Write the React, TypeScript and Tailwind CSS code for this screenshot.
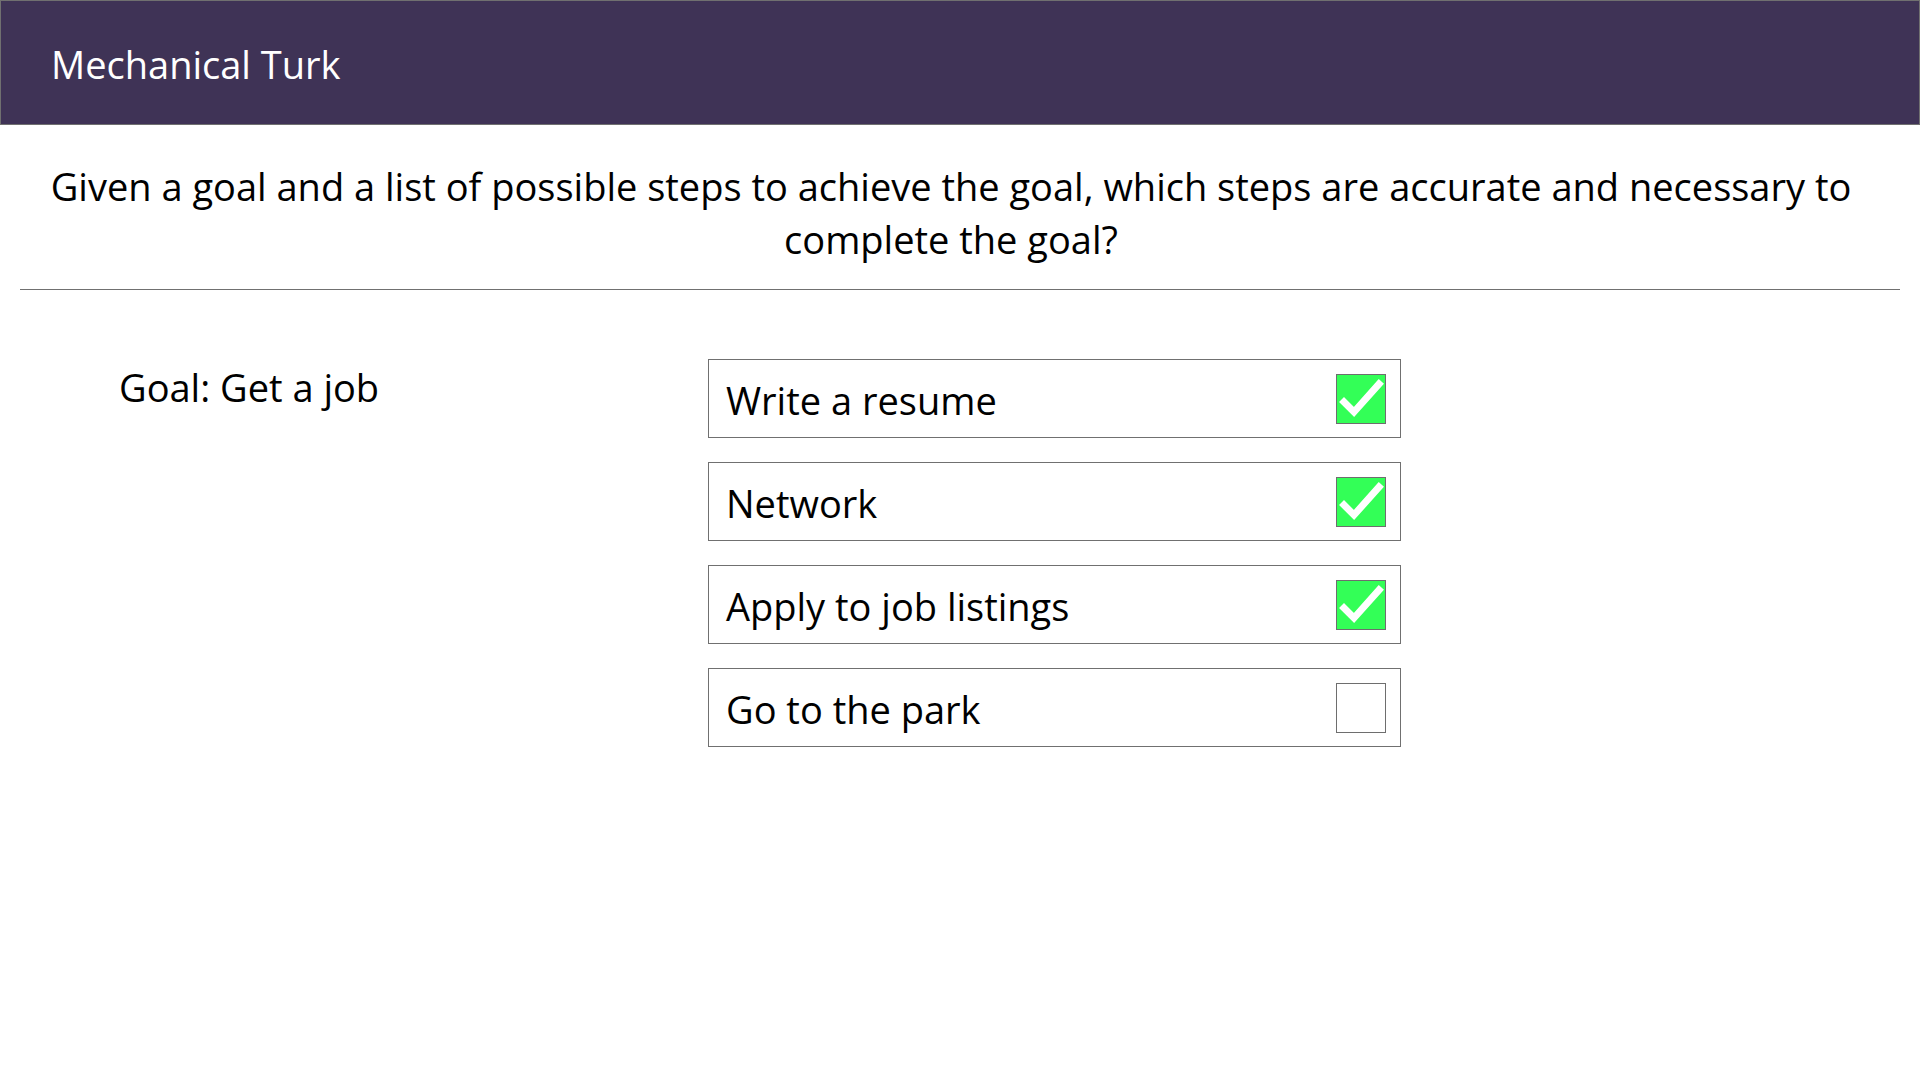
import React from "react";

const items = [
  { label: "Write a resume", checked: true },
  { label: "Network", checked: true },
  { label: "Apply to job listings", checked: true },
  { label: "Go to the park", checked: false },
];

function Check({ checked }: { checked: boolean }) {
  return (
    <div
      className={
        checked
          ? "w-[50px] h-[50px] border border-[#6e6e6e] bg-[#33ff57] flex items-center justify-center"
          : "w-[50px] h-[50px] border border-[#6e6e6e] bg-white"
      }
    >
      {checked && (
        <svg width="48" height="48" viewBox="0 0 48 48">
          <path d="M7 27 L17 37 L42 9" fill="none" stroke="#ffffff" strokeWidth="7" strokeLinecap="square" strokeLinejoin="miter" />
        </svg>
      )}
    </div>
  );
}

export default function App() {
  return (
    <div className="min-h-screen bg-white text-black" style={{ fontFamily: '"Open Sans", "Noto Sans", sans-serif' }}>
      <header className="h-[125px] bg-[#3f3356] border border-[#707070] flex items-center pl-[50px]">
        <h1 className="text-white text-[38px] leading-[53px] pt-[4px]">Mechanical Turk</h1>
      </header>
      <div className="px-[20px]">
        <p className="pt-[35px] pb-[23px] mr-[18px] text-center text-[38px] leading-[53px]">
          Given a goal and a list of possible steps to achieve the goal, which steps are accurate and necessary to
          <br />
          complete the goal?
        </p>
        <div className="border-t border-[#707070]" />
      </div>
      <div className="flex pt-[69px] pl-[119px]">
        <div className="w-[589px] text-[38px] leading-[53px] pt-[2px]">Goal: Get a job</div>
        <div className="flex flex-col gap-[24px] w-[693px]">
          {items.map((it) => (
            <div key={it.label} className="h-[79px] border border-[#707070] flex items-center justify-between pl-[17px] pr-[14px]">
              <span className="text-[38px] leading-[53px] pt-[3px]">{it.label}</span>
              <Check checked={it.checked} />
            </div>
          ))}
        </div>
      </div>
    </div>
  );
}
